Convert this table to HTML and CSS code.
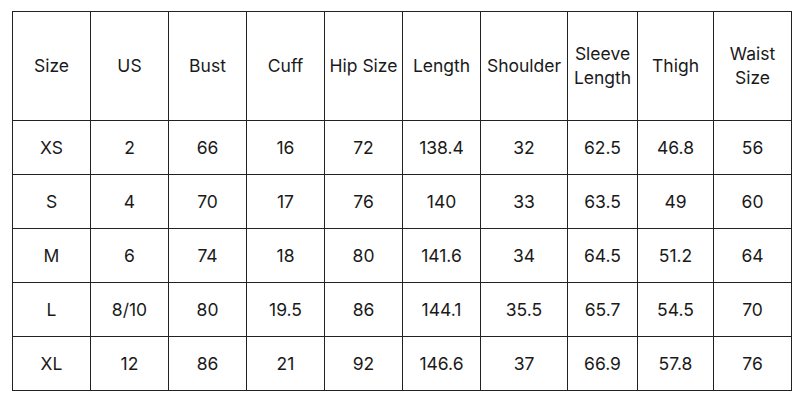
FILE: index.html
```html
<!DOCTYPE html>
<html>
<head>
<meta charset="utf-8">
<link rel="stylesheet" href="styles.css">
</head>
<body>
<div class="page">
<table class="size-table">
<colgroup>
<col class="c1"><col class="c2"><col class="c3"><col class="c4"><col class="c5"><col class="c6"><col class="c7"><col class="c8"><col class="c9"><col class="c10">
</colgroup>
<thead>
<tr><th>Size</th><th>US</th><th>Bust</th><th>Cuff</th><th>Hip Size</th><th>Length</th><th>Shoulder</th><th>Sleeve<br>Length</th><th>Thigh</th><th>Waist<br>Size</th></tr>
</thead>
<tbody>
<tr><td>XS</td><td>2</td><td>66</td><td>16</td><td>72</td><td>138.4</td><td>32</td><td>62.5</td><td>46.8</td><td>56</td></tr>
<tr><td>S</td><td>4</td><td>70</td><td>17</td><td>76</td><td>140</td><td>33</td><td>63.5</td><td>49</td><td>60</td></tr>
<tr><td>M</td><td>6</td><td>74</td><td>18</td><td>80</td><td>141.6</td><td>34</td><td>64.5</td><td>51.2</td><td>64</td></tr>
<tr><td>L</td><td>8/10</td><td>80</td><td>19.5</td><td>86</td><td>144.1</td><td>35.5</td><td>65.7</td><td>54.5</td><td>70</td></tr>
<tr><td>XL</td><td>12</td><td>86</td><td>21</td><td>92</td><td>146.6</td><td>37</td><td>66.9</td><td>57.8</td><td>76</td></tr>
</tbody>
</table>
</div>
</body>
</html>
```
FILE: styles.css
```css
html, body {
  margin: 0;
  padding: 0;
  background: #fff;
}
.page {
  padding: 11px 0 0 12px;
}
.size-table {
  border-collapse: collapse;
  table-layout: fixed;
  width: 780px;
  font-family: Inter, "Open Sans", sans-serif;
  font-size: 17.5px;
  color: #1a1a1a;
}
.size-table th,
.size-table td {
  border: 1.5px solid #222;
  text-align: center;
  vertical-align: middle;
  padding: 0;
  font-weight: normal;
  line-height: 24px;
}
.size-table th { height: 108px; }
.size-table td { height: 53px; }
.c1 { width: 78px; }
.c2 { width: 78px; }
.c3 { width: 78px; }
.c4 { width: 78px; }
.c5 { width: 78px; }
.c6 { width: 78px; }
.c7 { width: 87px; }
.c8 { width: 70px; }
.c9 { width: 76px; }
.c10 { width: 78px; }
```
